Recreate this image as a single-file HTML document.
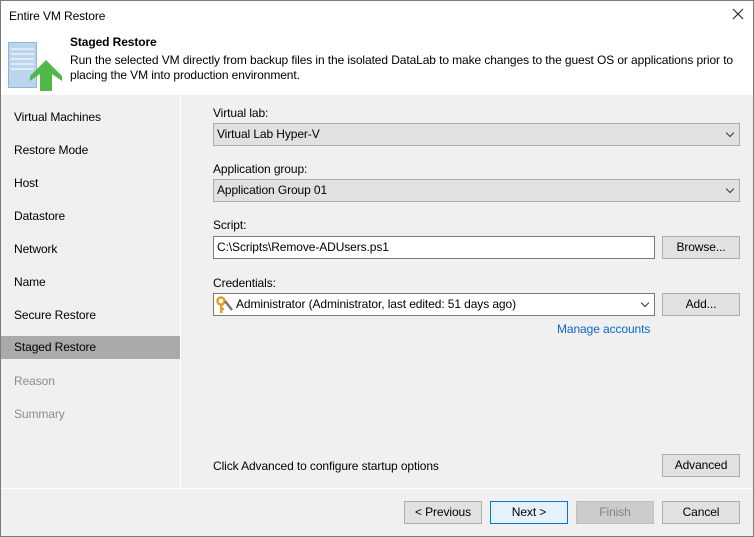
<!DOCTYPE html>
<html><head><meta charset="utf-8"><style>
*{box-sizing:border-box;margin:0;padding:0}
body{width:754px;height:537px;overflow:hidden;font-family:"Liberation Sans",sans-serif;font-size:12px;color:#000;background:#f0f0f0;position:relative;letter-spacing:-0.1px}
.win{position:absolute;left:0;top:0;width:754px;height:537px;border:1px solid #7a7a7a;background:#f0f0f0}
.hdr{position:absolute;left:0;top:0;width:752px;height:94px;background:#fff}
.t{position:absolute;white-space:nowrap}
.nav{position:absolute;left:0;top:94px;width:180px;height:394px;background:#f0f0f0;border-right:1px solid #fff}
.nav div{position:absolute;left:0;width:179px;height:22px;line-height:22px;padding-left:13px}
.sel{background:#aaaaaa}
.dis{color:#8d8d8d}
.box{position:absolute;height:23px;border:1px solid #adadad;background:#e1e1e1;line-height:21px;padding-left:3px}
.inp{background:#fff;border-color:#7a7a7a}
.btn{position:absolute;height:23px;border:1px solid #adadad;background:#e1e1e1;text-align:center;line-height:21px}
.arr{position:absolute;right:6px;top:6px;width:6px;height:6px;border-right:1px solid #333;border-bottom:1px solid #333;transform:rotate(45deg)}
</style></head><body>
<div class="win">
<div class="hdr">
 <div class="t" style="left:8px;top:8px">Entire VM Restore</div>
 <svg style="position:absolute;left:731px;top:7px" width="12" height="12"><path d="M1 1L11 11M11 1L1 11" stroke="#222" stroke-width="1.1"/></svg>
 <svg style="position:absolute;left:6px;top:39px" width="56" height="52">
  <rect x="1.5" y="2.5" width="28" height="45" fill="#bcd5ee" stroke="#8fb4dd"/>
  <g stroke="#fff"><line x1="4" y1="9" x2="27" y2="9"/><line x1="4" y1="14" x2="27" y2="14"/><line x1="4" y1="19" x2="27" y2="19"/><line x1="4" y1="24" x2="27" y2="24"/><line x1="4" y1="29" x2="27" y2="29"/></g>
  <polygon points="23,36 39,20 55,36 55,41 45,34 45,51 33,51 33,34 23,41" fill="#4fb848"/>
 </svg>
 <div class="t" style="left:69px;top:34px;font-weight:bold">Staged Restore</div>
 <div class="t" style="left:69px;top:52px;line-height:15px">Run the selected VM directly from backup files in the isolated DataLab to make changes to the guest OS or applications prior to<br>placing the VM into production environment.</div>
</div>
<div class="nav">
 <div style="top:11px">Virtual Machines</div>
 <div style="top:44px">Restore Mode</div>
 <div style="top:77px">Host</div>
 <div style="top:110px">Datastore</div>
 <div style="top:143px">Network</div>
 <div style="top:176px">Name</div>
 <div style="top:209px">Secure Restore</div>
 <div class="sel" style="top:241px;height:23px;line-height:23px">Staged Restore</div>
 <div class="dis" style="top:275px">Reason</div>
 <div class="dis" style="top:308px">Summary</div>
</div>
<div class="t" style="left:212px;top:105px">Virtual lab:</div>
<div class="box" style="left:212px;top:122px;width:527px">Virtual Lab Hyper-V<span class="arr"></span></div>
<div class="t" style="left:212px;top:161px">Application group:</div>
<div class="box" style="left:212px;top:178px;width:527px">Application Group 01<span class="arr"></span></div>
<div class="t" style="left:212px;top:217px">Script:</div>
<div class="box inp" style="left:212px;top:235px;width:442px">C:\Scripts\Remove-ADUsers.ps1</div>
<div class="btn" style="left:661px;top:235px;width:78px">Browse...</div>
<div class="t" style="left:212px;top:275px">Credentials:</div>
<div class="box inp" style="left:212px;top:292px;width:442px;padding-left:22px">Administrator (Administrator, last edited: 51 days ago)<span class="arr"></span>
 <svg style="position:absolute;left:2px;top:2px" width="18" height="18"><circle cx="5" cy="5" r="3.5" fill="none" stroke="#e0a020" stroke-width="2.5"/><rect x="4" y="8" width="2.5" height="9" fill="#e0a020"/><rect x="6" y="12" width="2" height="2" fill="#e0a020"/><line x1="9" y1="5" x2="16" y2="14" stroke="#777" stroke-width="2.5"/></svg>
</div>
<div class="btn" style="left:661px;top:292px;width:78px">Add...</div>
<div class="t" style="left:556px;top:321px;color:#0b67c9">Manage accounts</div>
<div class="t" style="left:212px;top:458px">Click Advanced to configure startup options</div>
<div class="btn" style="left:661px;top:453px;width:78px">Advanced</div>
<div style="position:absolute;left:0;top:487px;width:752px;height:1px;background:#fff"></div>
<div class="btn" style="left:403px;top:500px;width:78px">&lt; Previous</div>
<div class="btn" style="left:489px;top:500px;width:78px;background:#e5f1fb;border-color:#0078d7">Next &gt;</div>
<div class="btn" style="left:575px;top:500px;width:78px;background:#cccccc;border-color:#bfbfbf;color:#838383">Finish</div>
<div class="btn" style="left:661px;top:500px;width:78px">Cancel</div>
</div>
</body></html>
